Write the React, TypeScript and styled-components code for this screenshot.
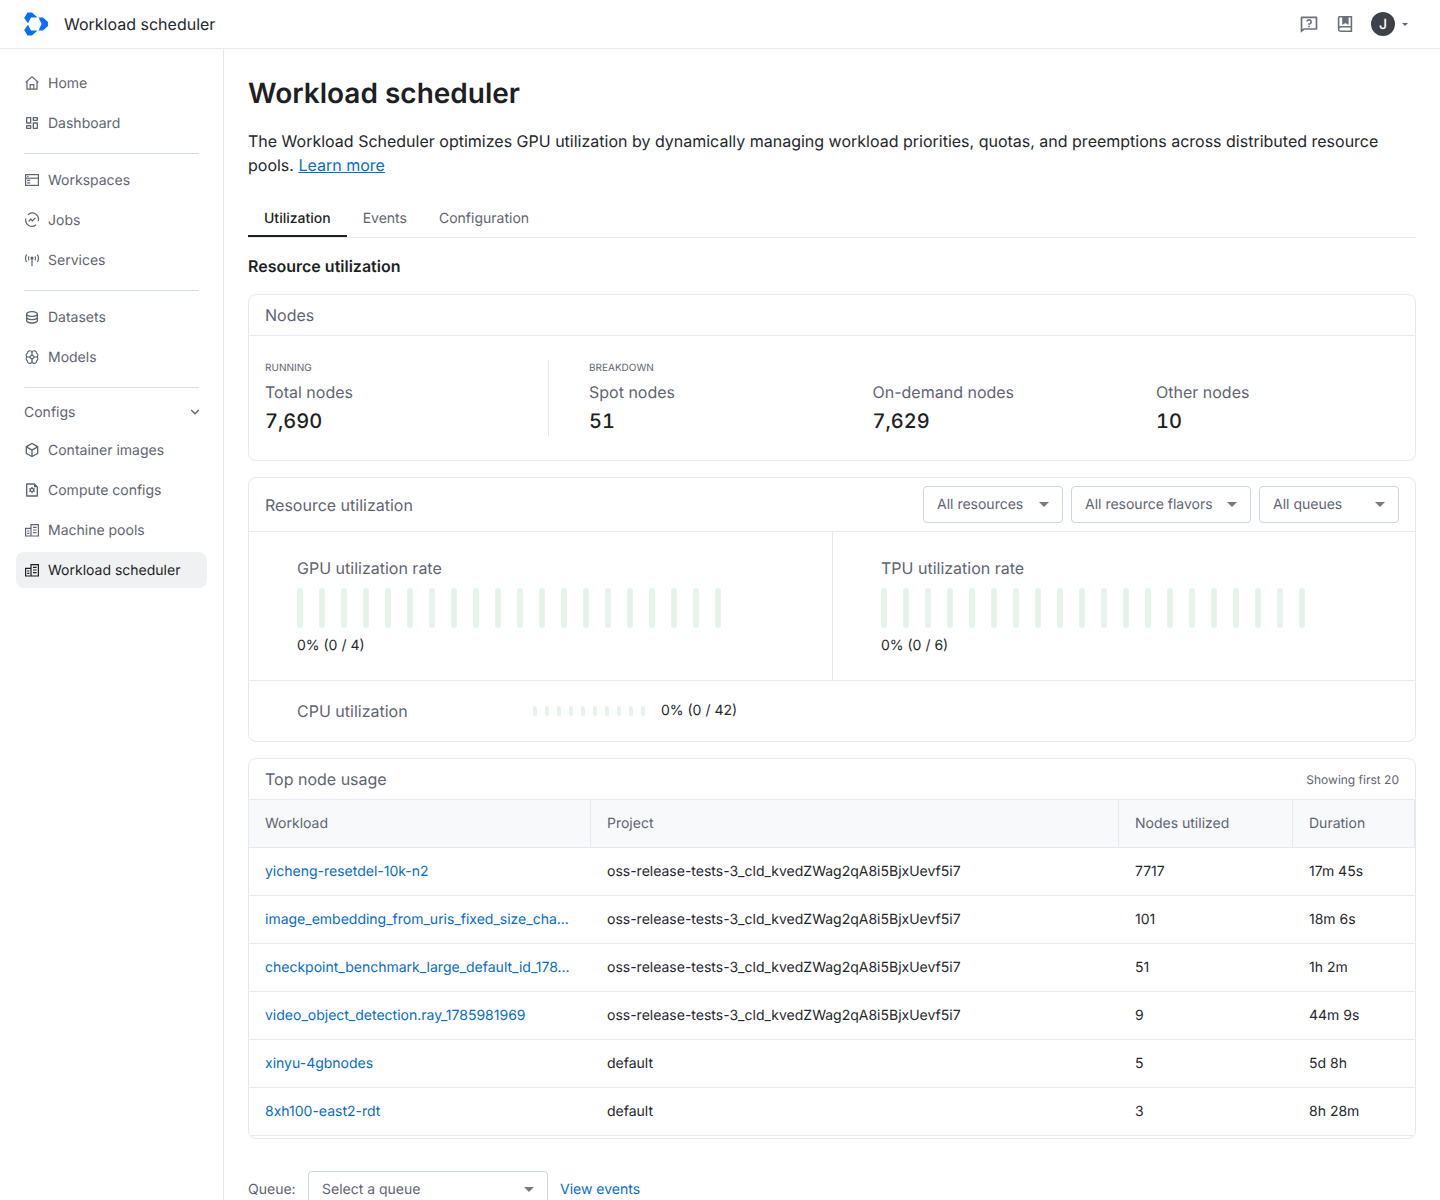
import React from "react";
import styled, { createGlobalStyle } from "styled-components";
import {
  RiDashboardLine,
  RiDatabase2Line,
  RiBox3Line,
  RiFileSettingsLine,
  RiQuestionnaireLine,
  RiArrowDownSLine,
} from "react-icons/ri";

const GlobalStyle = createGlobalStyle`
  html, body {
    margin: 0;
    padding: 0;
    height: 100%;
    overflow: hidden;
    background: #fff;
  }
  body {
    font-family: Inter, "Liberation Sans", sans-serif;
    font-size: 14px;
    color: #1d1f24;
    text-rendering: geometricPrecision;
  }
  * {
    box-sizing: border-box;
  }
`;

const Shell = styled.div`
  height: 1200px;
  display: flex;
  flex-direction: column;
  overflow: hidden;
`;

const TopBar = styled.header`
  flex: none;
  height: 49px;
  border-bottom: 1px solid #e6eaf0;
  display: flex;
  align-items: center;
  padding: 0 24px;
`;

const Product = styled.div`
  font-size: 16px;
  font-weight: 400;
  margin-left: 16px;
  color: #24272c;
  flex: 1;
`;

const TopIcons = styled.div`
  display: flex;
  align-items: center;
  gap: 16px;
  color: #6a6f78;
  margin-right: 8px;
`;

const Avatar = styled.div`
  width: 24px;
  height: 24px;
  border-radius: 50%;
  background: #3e4248;
  color: #fff;
  font-size: 14px;
  font-weight: 500;
  display: flex;
  align-items: center;
  justify-content: center;
`;

const SmallCaret = styled.span`
  width: 0;
  height: 0;
  border-left: 3.5px solid transparent;
  border-right: 3.5px solid transparent;
  border-top: 3.5px solid #5f6570;
  margin-left: -9px;
`;

const Body = styled.div`
  flex: 1;
  display: flex;
  min-height: 0;
`;

const Sidebar = styled.nav`
  flex: none;
  width: 224px;
  border-right: 1px solid #e6eaf0;
  padding: 16px 16px 0;
`;

const NavItem = styled.div<{ $active?: boolean }>`
  height: 36px;
  margin-bottom: 4px;
  border-radius: 8px;
  padding: 0 8px;
  display: flex;
  align-items: center;
  gap: 8px;
  width: 191px;
  color: ${(p) => (p.$active ? "#1d1f24" : "#5f6570")};
  background: ${(p) => (p.$active ? "#f0f1f3" : "transparent")};
  font-size: 14px;
  svg {
    flex: none;
  }
`;

const NavDivider = styled.hr`
  margin: 12px 8px 8px 8px;
  width: 175px;
  border: 0;
  border-top: 1px solid #d5dce5;
`;

const NavGroup = styled.div`
  height: 32px;
  margin-bottom: 4px;
  padding: 0 4px 0 8px;
  width: 191px;
  display: flex;
  align-items: center;
  justify-content: space-between;
  color: #5f6570;
  font-size: 14px;
`;

const Main = styled.main`
  flex: 1;
  min-width: 0;
  padding: 24px 24px 0;
  overflow: hidden;
`;

const Title = styled.h1`
  margin: 0;
  height: 40px;
  font-size: 28px;
  line-height: 40px;
  font-weight: 600;
  color: #1d1f24;
`;

const Intro = styled.p`
  margin: 16px 0 0;
  font-size: 16px;
  line-height: 24px;
  color: #24272c;
`;

const TextLink = styled.a`
  color: #036dcf;
  text-decoration: underline;
`;

const Tabs = styled.div`
  margin-top: 16px;
  height: 45px;
  border-bottom: 1px solid #e6eaf0;
  display: flex;
`;

const Tab = styled.div<{ $active?: boolean }>`
  height: 44px;
  padding: 16px 16px 0;
  line-height: 20px;
  font-size: 14px;
  font-weight: ${(p) => (p.$active ? 500 : 400)};
  color: ${(p) => (p.$active ? "#1d1f24" : "#5f6570")};
  border-bottom: 2px solid ${(p) => (p.$active ? "#1d1f24" : "transparent")};
`;

const SectionTitle = styled.h2`
  margin: 16px 0 16px;
  font-size: 16px;
  line-height: 24px;
  font-weight: 600;
  color: #1d1f24;
`;

const Card = styled.section`
  border: 1px solid #e6eaf0;
  border-radius: 8px;
  margin-bottom: 16px;
  overflow: hidden;
`;

const CardHeader = styled.div<{ $height: number }>`
  height: ${(p) => p.$height}px;
  padding: 0 16px;
  border-bottom: 1px solid #e6eaf0;
  display: flex;
  align-items: center;
  justify-content: space-between;
`;

const CardTitle = styled.div`
  font-size: 16px;
  color: #5f6570;
`;

const Note = styled.div`
  font-size: 12px;
  color: #5f6570;
`;

const StatsRow = styled.div`
  padding: 24px 16px;
  display: flex;
`;

const StatsLead = styled.div`
  flex: none;
  width: 284px;
  border-right: 1px solid #e6eaf0;
`;

const StatsRest = styled.div`
  flex: 1;
  min-width: 0;
  padding-left: 40px;
`;

const StatsGrid = styled.div`
  display: grid;
  grid-template-columns: repeat(3, 283.5px);
`;

const Eyebrow = styled.div`
  font-size: 10px;
  line-height: 16px;
  color: #5f6570;
  text-transform: uppercase;
`;

const StatLabel = styled.div`
  font-size: 16px;
  line-height: 24px;
  margin-top: 4px;
  color: #5f6570;
`;

const StatValue = styled.div`
  font-size: 20px;
  line-height: 29px;
  font-weight: 500;
  font-variant-numeric: tabular-nums;
  color: #1d1f24;
  margin-top: 3px;
`;

const Selects = styled.div`
  display: flex;
  gap: 8px;
`;

const SelectBox = styled.div<{ $width: number }>`
  width: ${(p) => p.$width}px;
  height: 37px;
  border: 1px solid #cbd6e3;
  border-radius: 4px;
  padding: 0 13px;
  display: flex;
  align-items: center;
  justify-content: space-between;
  font-size: 14px;
  color: #5f6570;
  background: #fff;
`;

const Caret = styled.span`
  width: 0;
  height: 0;
  border-left: 5px solid transparent;
  border-right: 5px solid transparent;
  border-top: 5px solid #757a82;
`;

const RateGrid = styled.div`
  display: grid;
  grid-template-columns: 584px 1fr;
  border-bottom: 1px solid #e6eaf0;
`;

const RateCell = styled.div`
  height: 148px;
  padding: 24px 48px 0;
  &:first-child {
    border-right: 1px solid #e6eaf0;
  }
`;

const RateTitle = styled.div`
  font-size: 16px;
  line-height: 24px;
  color: #5f6570;
`;

const Bars = styled.div<{ $gap: number }>`
  display: flex;
  gap: ${(p) => p.$gap}px;
`;

const Bar = styled.div<{ $width: number; $height: number }>`
  width: ${(p) => p.$width}px;
  height: ${(p) => p.$height}px;
  border-radius: ${(p) => p.$width / 2}px;
  background: #e7f3ea;
`;

const RateValue = styled.div`
  font-size: 14px;
  line-height: 20px;
  color: #24272c;
`;

const RateBars = styled.div`
  margin: 8px 0;
`;

const CpuRow = styled.div`
  height: 60px;
  padding: 0 48px;
  display: flex;
  align-items: center;
`;

const CpuTitle = styled(RateTitle)`
  width: 236px;
`;

const CpuValue = styled(RateValue)`
  margin-left: 16px;
`;

const Table = styled.table`
  width: 100%;
  table-layout: fixed;
  border-collapse: separate;
  border-spacing: 0;
`;

const Th = styled.th<{ $width?: number }>`
  width: ${(p) => (p.$width ? `${p.$width}px` : "auto")};
  height: 48px;
  padding: 0 16px;
  text-align: left;
  font-size: 14px;
  font-weight: 400;
  color: #5f6570;
  background: #f8f9fb;
  border-right: 1px solid #e6eaf0;
  border-bottom: 1px solid #e6eaf0;
`;

const Td = styled.td`
  height: 48px;
  padding: 0 16px;
  font-size: 14px;
  color: #24272c;
  border-bottom: 1px solid #e6eaf0;
`;

const RowLink = styled.a`
  color: #036dcf;
  text-decoration: none;
  white-space: nowrap;
`;

const TableEnd = styled.div`
  height: 2px;
`;

const QueueRow = styled.div`
  display: flex;
  align-items: center;
  margin-top: 32px;
`;

const QueueLabel = styled.div`
  width: 60px;
  font-size: 14px;
  color: #5f6570;
`;

const ViewLink = styled(RowLink)`
  margin-left: 12px;
`;

const Logo = () => (
  <svg width="24" height="24" viewBox="0 0 24 24" fill="#0b6dff">
    <path d="M3.5 0.5H8L13.5 5.5H7L4 11.2 0.2 6Z" />
    <path d="M0.2 18 4 12.8 7 18.5H13.5L8 23.5H3.5Z" />
    <path d="M14.5 5.5H19L24 10V14L19 18.5H14.5L17.6 12Z" />
  </svg>
);

const BookIcon = () => (
  <svg width="20" height="20" viewBox="0 0 20 20" fill="none" stroke="currentColor" strokeWidth="1.6">
    <path d="M3.6 15V3.6A.8.8 0 0 1 4.4 2.8H16.4V17.2H5.8A2.2 2.2 0 0 1 3.6 15ZM3.6 15A2.2 2.2 0 0 1 5.8 12.8H16.4" />
    <path d="M8 3v6.6l2.4-1.6 2.4 1.6V3" fill="currentColor" />
  </svg>
);

const HomeIcon = () => (
  <svg width="16" height="16" viewBox="0 0 16 16" fill="none" stroke="currentColor" strokeWidth="1.2">
    <path d="M1.6 7.4 8 1.8l6.4 5.6M3 6.4v7.8h10V6.4" />
    <path d="M6.2 14.2V9.6h3.6v4.6" />
  </svg>
);

const WindowIcon = () => (
  <svg width="16" height="16" viewBox="0 0 16 16" fill="none" stroke="currentColor" strokeWidth="1.2">
    <rect x="1.6" y="2.6" width="12.8" height="10.8" />
    <path d="M1.6 6.2H14.4" />
    <path d="M3.2 4.4h1.4M3.2 8.4h3M3.2 10.8h3" />
  </svg>
);

const JobsIcon = () => (
  <svg width="16" height="16" viewBox="0 0 16 16" fill="none" stroke="currentColor" strokeWidth="1.2">
    <path d="M4 2.8A6.2 6.2 0 0 1 14.1 9.4M12 12.8A6.2 6.2 0 0 1 1.9 6.6" />
    <path d="M4.6 9.4 6.8 7l1.6 1.8L11.4 5.8" />
  </svg>
);

const ServicesIcon = () => (
  <svg width="16" height="16" viewBox="0 0 16 16" fill="none" stroke="currentColor" strokeWidth="1.2">
    <path d="M2.6 2.6a7 7 0 0 0 0 7.4M13.4 2.6a7 7 0 0 1 0 7.4" />
    <path d="M5 4.2a4 4 0 0 0 0 4.2M11 4.2a4 4 0 0 1 0 4.2" />
    <path d="M8 7.6v6.6" />
    <circle cx="8" cy="6.2" r="1" fill="currentColor" />
  </svg>
);

const ModelsIcon = () => (
  <svg width="16" height="16" viewBox="0 0 16 16" fill="none" stroke="currentColor" strokeWidth="1.2">
    <path d="M8 3.2A2.4 2.4 0 0 1 12.6 4.2 2.4 2.4 0 0 1 13.2 8 2.8 2.8 0 0 1 12.6 12 2.4 2.4 0 0 1 8 13 2.4 2.4 0 0 1 3.4 12 2.8 2.8 0 0 1 2.8 8 2.4 2.4 0 0 1 3.4 4.2 2.4 2.4 0 0 1 8 3.2Z" />
    <path d="M8 3.2v2.6M8 10.4V13M2.8 8h2.8L8 5.8 10.4 8h2.8M5.6 8 8 10.4 10.4 8" />
  </svg>
);

const PoolsIcon = () => (
  <svg width="16" height="16" viewBox="0 0 16 16" fill="none" stroke="currentColor" strokeWidth="1.2">
    <path d="M1.6 14V6.4H7V14M7 14V2.6H14.4V14M1 14H15" />
    <path d="M3.2 9H5.4M3.2 11.4H5.4M9 5.4H12.6M9 8H12.6M9 10.6H12.6" />
  </svg>
);

const bars = (n: number, width: number, height: number, gap: number) => (
  <Bars $gap={gap}>
    {Array.from({ length: n }, (_, i) => (
      <Bar key={i} $width={width} $height={height} />
    ))}
  </Bars>
);

const rows = [
  ["yicheng-resetdel-10k-n2", "oss-release-tests-3_cld_kvedZWag2qA8i5BjxUevf5i7", "7717", "17m 45s"],
  ["image_embedding_from_uris_fixed_size_cha...", "oss-release-tests-3_cld_kvedZWag2qA8i5BjxUevf5i7", "101", "18m 6s"],
  ["checkpoint_benchmark_large_default_id_178...", "oss-release-tests-3_cld_kvedZWag2qA8i5BjxUevf5i7", "51", "1h 2m"],
  ["video_object_detection.ray_1785981969", "oss-release-tests-3_cld_kvedZWag2qA8i5BjxUevf5i7", "9", "44m 9s"],
  ["xinyu-4gbnodes", "default", "5", "5d 8h"],
  ["8xh100-east2-rdt", "default", "3", "8h 28m"],
];

export default function App() {
  return (
    <Shell>
      <GlobalStyle />
      <TopBar>
        <Logo />
        <Product>Workload scheduler</Product>
        <TopIcons>
          <RiQuestionnaireLine size={20} />
          <BookIcon />
          <Avatar>J</Avatar>
          <SmallCaret />
        </TopIcons>
      </TopBar>
      <Body>
        <Sidebar>
          <NavItem><HomeIcon />Home</NavItem>
          <NavItem><RiDashboardLine size={16} />Dashboard</NavItem>
          <NavDivider />
          <NavItem><WindowIcon />Workspaces</NavItem>
          <NavItem><JobsIcon />Jobs</NavItem>
          <NavItem><ServicesIcon />Services</NavItem>
          <NavDivider />
          <NavItem><RiDatabase2Line size={16} />Datasets</NavItem>
          <NavItem><ModelsIcon />Models</NavItem>
          <NavDivider />
          <NavGroup>Configs<RiArrowDownSLine size={16} /></NavGroup>
          <NavItem><RiBox3Line size={16} />Container images</NavItem>
          <NavItem><RiFileSettingsLine size={16} />Compute configs</NavItem>
          <NavItem><PoolsIcon />Machine pools</NavItem>
          <NavItem $active><PoolsIcon />Workload scheduler</NavItem>
        </Sidebar>
        <Main>
          <Title>Workload scheduler</Title>
          <Intro>
            The Workload Scheduler optimizes GPU utilization by dynamically managing workload priorities, quotas, and
            preemptions across distributed resource pools. <TextLink href="#">Learn more</TextLink>
          </Intro>
          <Tabs>
            <Tab $active>Utilization</Tab>
            <Tab>Events</Tab>
            <Tab>Configuration</Tab>
          </Tabs>
          <SectionTitle>Resource utilization</SectionTitle>

          <Card>
            <CardHeader $height={41}>
              <CardTitle>Nodes</CardTitle>
            </CardHeader>
            <StatsRow>
              <StatsLead>
                <Eyebrow>Running</Eyebrow>
                <StatLabel>Total nodes</StatLabel>
                <StatValue>7,690</StatValue>
              </StatsLead>
              <StatsRest>
                <Eyebrow>Breakdown</Eyebrow>
                <StatsGrid>
                  <div>
                    <StatLabel>Spot nodes</StatLabel>
                    <StatValue>51</StatValue>
                  </div>
                  <div>
                    <StatLabel>On-demand nodes</StatLabel>
                    <StatValue>7,629</StatValue>
                  </div>
                  <div>
                    <StatLabel>Other nodes</StatLabel>
                    <StatValue>10</StatValue>
                  </div>
                </StatsGrid>
              </StatsRest>
            </StatsRow>
          </Card>

          <Card>
            <CardHeader $height={54}>
              <CardTitle>Resource utilization</CardTitle>
              <Selects>
                <SelectBox $width={140}>All resources<Caret /></SelectBox>
                <SelectBox $width={180}>All resource flavors<Caret /></SelectBox>
                <SelectBox $width={140}>All queues<Caret /></SelectBox>
              </Selects>
            </CardHeader>
            <RateGrid>
              <RateCell>
                <RateTitle>GPU utilization rate</RateTitle>
                <RateBars>{bars(20, 6, 40, 16)}</RateBars>
                <RateValue>0% (0 / 4)</RateValue>
              </RateCell>
              <RateCell>
                <RateTitle>TPU utilization rate</RateTitle>
                <RateBars>{bars(20, 6, 40, 16)}</RateBars>
                <RateValue>0% (0 / 6)</RateValue>
              </RateCell>
            </RateGrid>
            <CpuRow>
              <CpuTitle>CPU utilization</CpuTitle>
              {bars(10, 4, 10, 8)}
              <CpuValue>0% (0 / 42)</CpuValue>
            </CpuRow>
          </Card>

          <Card>
            <CardHeader $height={41}>
              <CardTitle>Top node usage</CardTitle>
              <Note>Showing first 20</Note>
            </CardHeader>
            <Table>
              <thead>
                <tr>
                  <Th $width={342}>Workload</Th>
                  <Th $width={528}>Project</Th>
                  <Th $width={174}>Nodes utilized</Th>
                  <Th>Duration</Th>
                </tr>
              </thead>
              <tbody>
                {rows.map((row) => (
                  <tr key={row[0]}>
                    <Td><RowLink href="#">{row[0]}</RowLink></Td>
                    <Td>{row[1]}</Td>
                    <Td>{row[2]}</Td>
                    <Td>{row[3]}</Td>
                  </tr>
                ))}
              </tbody>
            </Table>
            <TableEnd />
          </Card>

          <QueueRow>
            <QueueLabel>Queue:</QueueLabel>
            <SelectBox $width={240}>Select a queue<Caret /></SelectBox>
            <ViewLink href="#">View events</ViewLink>
          </QueueRow>
        </Main>
      </Body>
    </Shell>
  );
}
